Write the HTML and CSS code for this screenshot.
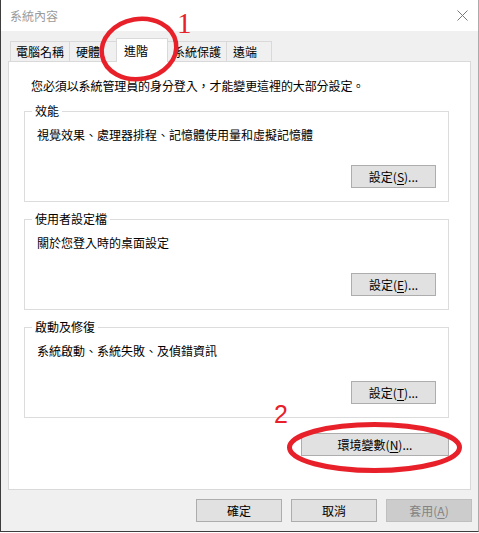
FILE: index.html
```html
<!DOCTYPE html>
<html lang="zh-Hant">
<head>
<meta charset="utf-8">
<title>系統內容</title>
<link rel="stylesheet" href="styles.css">
</head>
<body>
<div class="window">
  <div class="titlebar">
    <span class="title">系統內容</span>
    <svg class="close" width="11" height="11" viewBox="0 0 11 11"><path d="M0.5 0.5 L10.5 10.5 M10.5 0.5 L0.5 10.5" stroke="#7a7a7a" stroke-width="1" fill="none"/></svg>
  </div>
  <div class="client">
    <div class="tabs">
      <div class="tab tab-1">電腦名稱</div>
      <div class="tab tab-2">硬體</div>
      <div class="tab tab-active">進階</div>
      <div class="tab tab-4">系統保護</div>
      <div class="tab tab-5">遠端</div>
    </div>
    <div class="panel">
      <p class="info">您必須以系統管理員的身分登入，才能變更這裡的大部分設定。</p>
      <div class="group">
        <span class="legend">效能</span>
        <p class="desc">視覺效果、處理器排程、記憶體使用量和虛擬記憶體</p>
        <div class="group-actions"><button class="btn btn-set">設定(<u>S</u>)...</button></div>
      </div>
      <div class="group">
        <span class="legend">使用者設定檔</span>
        <p class="desc">關於您登入時的桌面設定</p>
        <div class="group-actions"><button class="btn btn-set">設定(<u>E</u>)...</button></div>
      </div>
      <div class="group">
        <span class="legend">啟動及修復</span>
        <p class="desc">系統啟動、系統失敗、及偵錯資訊</p>
        <div class="group-actions"><button class="btn btn-set">設定(<u>T</u>)...</button></div>
      </div>
      <div class="env-row"><button class="btn btn-env">環境變數(<u>N</u>)...</button></div>
    </div>
    <div class="footer">
      <button class="btn btn-foot">確定</button>
      <button class="btn btn-foot">取消</button>
      <button class="btn btn-foot btn-disabled">套用(<u>A</u>)</button>
    </div>
  </div>
  <svg class="annot" width="479" height="533" viewBox="0 0 479 533">
    <ellipse cx="139" cy="49" rx="37.5" ry="30" transform="rotate(-10 139 49)" fill="none" stroke="#e8202a" stroke-width="4.5"/>
    <ellipse cx="374.5" cy="447.5" rx="85" ry="23" fill="none" stroke="#e8202a" stroke-width="5"/>
  </svg>
  <span class="num num-1">1</span>
  <span class="num num-2">2</span>
</div>
</body>
</html>
```
FILE: styles.css
```css
html, body {
  margin: 0;
  padding: 0;
  background: #ffffff;
}

body {
  font-family: "Noto Sans CJK TC", "Noto Sans", sans-serif;
  font-size: 12px;
  color: #000;
}

.window {
  position: relative;
  width: 479px;
  height: 532px;
  box-sizing: border-box;
  border-left: 1px solid #3d3d3d;
  border-bottom: 1px solid #3d3d3d;
  border-right: 1px solid #ababab;
  background: #f0f0f0;
  display: flex;
  flex-direction: column;
}

.titlebar {
  height: 31px;
  flex: none;
  background: #ffffff;
  display: flex;
  align-items: center;
  justify-content: space-between;
  padding: 0 10px 0 9px;
}

.title {
  color: #9b9b9b;
  font-size: 12px;
  line-height: 16px;
}

.close {
  display: block;
  margin-top: 0;
}

.client {
  flex: 1;
  padding: 7px 0 0 7px;
  display: flex;
  flex-direction: column;
}

.tabs {
  display: flex;
  align-items: flex-end;
  margin-left: 2px;
  height: 23px;
}

.tab {
  box-sizing: border-box;
  height: 20px;
  border: 1px solid #d9d9d9;
  border-bottom: none;
  background: #f0f0f0;
  padding-left: 6px;
  line-height: 19px;
  white-space: nowrap;
}

.tab + .tab {
  margin-left: -1px;
}

.tab-1 { width: 60px; padding-left: 5px; }
.tab-2 { width: 49px; }
.tab-4 { width: 60px; padding-left: 5px; }
.tab-5 { width: 46px; }

.tabs .tab-active {
  width: 52px;
  height: 24px;
  margin-left: -2px;
  margin-bottom: -1px;
  padding-left: 7px;
  padding-top: 2px;
  background: #ffffff;
  position: relative;
  z-index: 1;
}

.tabs .tab-active + .tab {
  margin-left: -1px;
}

.panel {
  box-sizing: border-box;
  width: 463px;
  height: 429px;
  border: 1px solid #d9d9d9;
  background: #ffffff;
  padding-top: 16px;
}

.info {
  margin: 0 0 0 22px;
  line-height: 16px;
  letter-spacing: -0.1px;
}

.group {
  position: relative;
  box-sizing: border-box;
  width: 425px;
  height: 91px;
  margin: 17px 0 0 15px;
  border: 1px solid #dcdcdc;
  padding-top: 15px;
}

.legend {
  position: absolute;
  left: 7px;
  top: -9px;
  padding: 0 3px;
  background: #ffffff;
  line-height: 16px;
}

.desc {
  margin: 0 0 0 12px;
  line-height: 16px;
}

.group-actions {
  display: flex;
  justify-content: flex-end;
  padding-right: 12px;
  margin-top: 22px;
}

.btn {
  box-sizing: border-box;
  height: 23px;
  margin: 0;
  padding: 0;
  border: 1px solid #adadad;
  border-radius: 0;
  background: #e1e1e1;
  font-family: "Noto Sans CJK TC", "Noto Sans", sans-serif;
  font-size: 12px;
  line-height: 20px;
  color: #000;
  text-align: center;
}

.btn u {
  text-decoration-thickness: 1px;
  text-underline-offset: 2px;
}

.btn-set {
  width: 85px;
}

.env-row {
  display: flex;
  justify-content: flex-end;
  padding-right: 21px;
  margin-top: 15px;
}

.btn-env {
  width: 148px;
}

.footer {
  display: flex;
  gap: 9px;
  margin-top: 9px;
  padding-left: 188px;
}

.btn-foot {
  width: 86px;
}

.btn-disabled {
  background: #cccccc;
  border-color: #bfbfbf;
  color: #838383;
}

.annot {
  position: absolute;
  left: -1px;
  top: 0;
  pointer-events: none;
  z-index: 5;
}

.num {
  position: absolute;
  color: #e8202a;
  z-index: 6;
}

.num-1 {
  left: 176px;
  top: 9px;
  font-family: "Liberation Serif", serif;
  font-size: 29px;
  line-height: 28px;
}

.num-2 {
  left: 273px;
  top: 402px;
  font-family: "Liberation Sans", sans-serif;
  font-size: 25px;
  line-height: 25px;
}
```
